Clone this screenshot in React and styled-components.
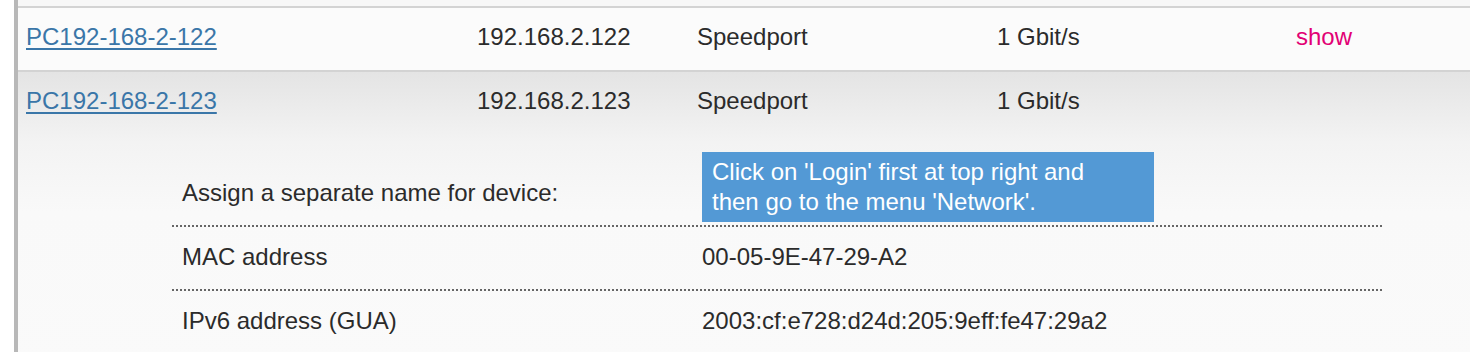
import React from "react";
import styled, { createGlobalStyle } from "styled-components";

const devices = [
    { name: "PC192-168-2-122", ip: "192.168.2.122", via: "Speedport", speed: "1 Gbit/s", open: false },
    { name: "PC192-168-2-123", ip: "192.168.2.123", via: "Speedport", speed: "1 Gbit/s", open: true },
];

export default function App() {
    return (
        <>
            <GlobalStyle />
            <Frame>
                <TopStrip />
                {devices.map((d) => (
                    <Device key={d.name} open={d.open}>
                        <DeviceRow>
                            <Cell><NameLink href="#">{d.name}</NameLink></Cell>
                            <Cell>{d.ip}</Cell>
                            <Cell>{d.via}</Cell>
                            <Cell>{d.speed}</Cell>
                            <Cell>{!d.open && <ShowLink href="#">show</ShowLink>}</Cell>
                        </DeviceRow>
                        {d.open && (
                            <Details>
                                <DetailRow>
                                    <Label $bottom>Assign a separate name for device:</Label>
                                    <BoxCell>
                                        <Hint>Click on 'Login' first at top right and then go to the menu 'Network'.</Hint>
                                    </BoxCell>
                                </DetailRow>
                                <Dots />
                                <DetailRow>
                                    <Label>MAC address</Label>
                                    <Value>00-05-9E-47-29-A2</Value>
                                </DetailRow>
                                <Dots />
                                <DetailRow>
                                    <Label>IPv6 address (GUA)</Label>
                                    <Value>2003:cf:e728:d24d:205:9eff:fe47:29a2</Value>
                                </DetailRow>
                            </Details>
                        )}
                    </Device>
                ))}
            </Frame>
        </>
    );
}
// ::::::::::Styled-Components::::::::::
const GlobalStyle = createGlobalStyle`
    body{
        margin: 0;
        background: #ffffff;
        font-family: "Liberation Sans", Arial, sans-serif;
        font-size: 24px;
        color: #2b2b2b;
    }
`
const Frame = styled.div`
    margin-left: 14px;
    border-left: 4px solid #b8b8b8;
    height: 352px;
    overflow: hidden;
`
const TopStrip = styled.div`
    height: 6px;
    background-color: #f7f7f7;
`
const Device = styled.div`
    border-top: 2px solid #d3d3d3;
    background: ${(p) => p.open
        ? "linear-gradient(#e4e4e4 0px, #f3f3f3 70px, #f9f9f9 140px, #fafafa 100%)"
        : "#fbfbfb"};
`
const DeviceRow = styled.div`
    display: grid;
    grid-template-columns: 451px 220px 300px 299px 1fr;
    height: 62px;
    padding-bottom: 4px;
    box-sizing: border-box;
    align-items: center;
`
const Cell = styled.div`
    padding-left: 8px;
    white-space: nowrap;
`
const NameLink = styled.a`
    color: #3a76a8;
    text-decoration: underline;
    text-underline-offset: 3px;
`
const ShowLink = styled.a`
    color: #e20074;
    text-decoration: none;
`
const Details = styled.div`
    margin-left: 154px;
    width: 1210px;
    padding-bottom: 20px;
`
const DetailRow = styled.div`
    display: grid;
    grid-template-columns: 530px 1fr;
    align-items: center;
`
const Label = styled.div`
    display: flex;
    align-items: center;
    min-height: 62px;
    padding-left: 10px;
    padding-bottom: 2px;
    box-sizing: border-box;
    align-self: ${(p) => (p.$bottom ? "end" : "center")};
`
const Value = styled.div`
    display: flex;
    align-items: center;
    min-height: 62px;
    padding-bottom: 2px;
    box-sizing: border-box;
`
const BoxCell = styled.div`
    padding: 18px 0 3px;
`
const Hint = styled.div`
    width: 452px;
    box-sizing: border-box;
    padding: 5px 40px 5px 10px;
    line-height: 30px;
    background-color: #5399d5;
    color: #ffffff;
`
const Dots = styled.div`
    height: 2px;
    background-image: repeating-linear-gradient(90deg, #666666 0 2px, transparent 2px 4px);
`
